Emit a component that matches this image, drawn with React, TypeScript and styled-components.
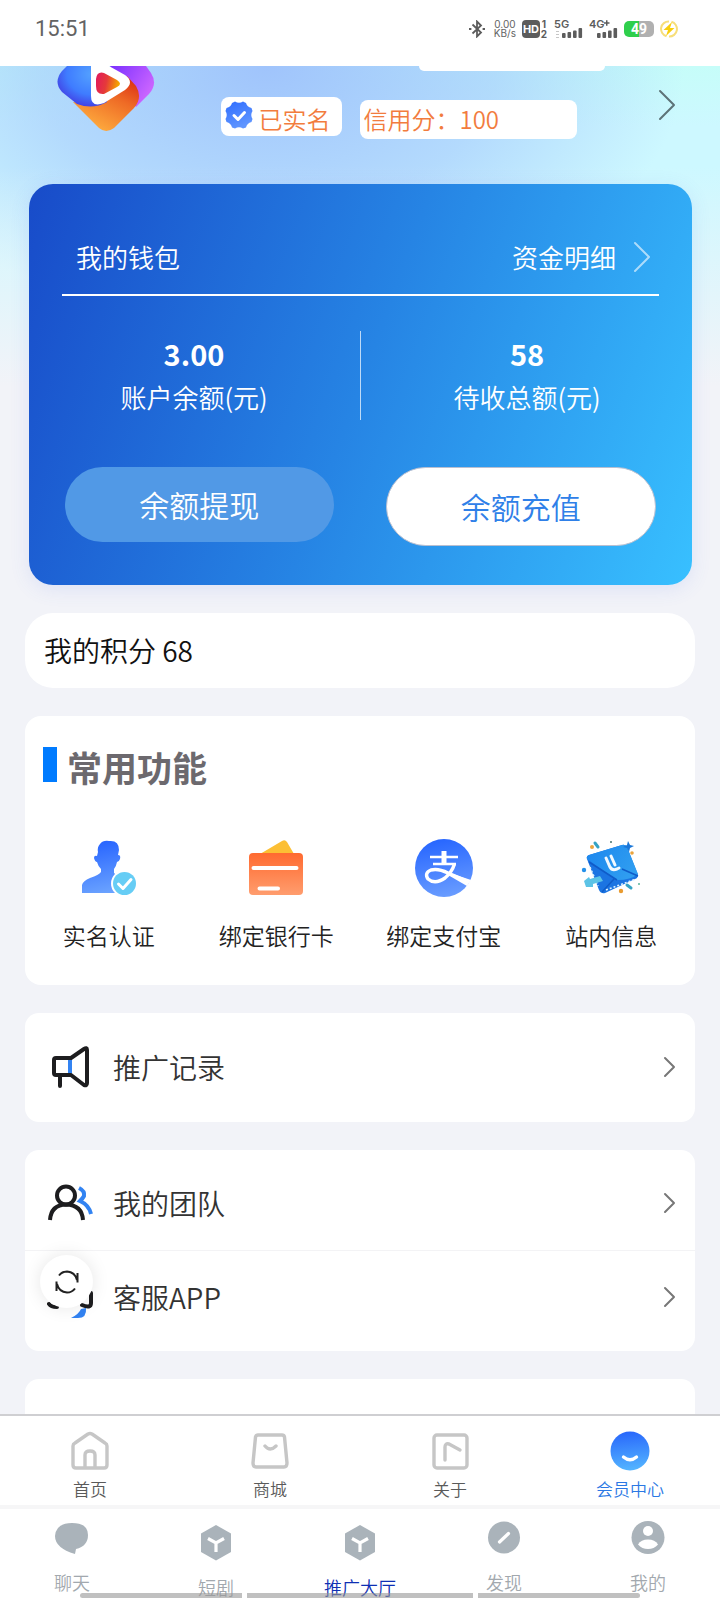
import React from "react";
import styled, { createGlobalStyle } from "styled-components";

const GlobalStyle = createGlobalStyle`
  *, *::before, *::after { box-sizing: border-box; }
  body {
    margin: 0;
    font-family: "Noto Sans CJK SC", "Noto Sans", sans-serif;
    font-weight: 350;
    color: #222;
    background: #f2f3f8;
  }
  button {
    border: 0;
    padding: 0;
    background: none;
    font: inherit;
    color: inherit;
    cursor: pointer;
  }
  a { color: inherit; text-decoration: none; }
  h1, h2, p, dl, dt, dd { margin: 0; }
  svg { display: block; flex: none; }
`;

const Page = styled.div`
  display: flex;
  flex-direction: column;
  height: 100vh;
`;

/* ---------- status bar ---------- */

const StatusBar = styled.header`
  display: flex;
  flex: none;
  align-items: center;
  justify-content: space-between;
  height: 66px;
  padding: 0 42px 8px 35px;
  background: #fff;
  color: #636363;
  font-family: Roboto, sans-serif;
  font-weight: 400;
`;

const Clock = styled.time`
  font-size: 22px;
  line-height: 28px;
`;

const StatusIcons = styled.div`
  display: flex;
  align-items: center;
  gap: 6px;
`;

const NetSpeed = styled.span`
  display: flex;
  flex-direction: column;
  align-items: center;
  margin-left: 3px;
  font-family: Inter, sans-serif;
  font-size: 10px;
  line-height: 9px;
`;

const Battery = styled.span`
  display: flex;
  align-items: center;
  justify-content: center;
  width: 30px;
  height: 16px;
  border-radius: 5px;
  background: linear-gradient(90deg, #2fcf4c 50%, #b0b0b0 50%);
  color: #fff;
  font-size: 14px;
  font-weight: 700;
  line-height: 16px;
`;

/* ---------- profile ---------- */

const Content = styled.main`
  flex: 1;
  min-height: 0;
  overflow-y: auto;
  scrollbar-width: none;
  background:
    linear-gradient(180deg, rgba(242, 243, 248, 0) 100px, #f2f3f8 320px) 0 0 / 100% 320px no-repeat,
    radial-gradient(ellipse 58% 260px at 37% 0, #a0c4fc 0, rgba(162, 198, 252, 0.6) 55%, rgba(162, 198, 252, 0) 100%) 0 0 / 100% 320px no-repeat,
    linear-gradient(180deg, #c6fdf9, #cdf8ff 60px, #cdf8ff) 0 0 / 100% 320px no-repeat,
    #f2f3f8;
`;

const Profile = styled.section`
  display: flex;
  justify-content: space-between;
  height: 118px;
  padding: 0 44px 0 57px;
`;

const ProfileInfo = styled.div`
  display: flex;
  flex-direction: column;
  width: 384px;
  margin-left: 12px;
  gap: 26px;
`;

const NameTag = styled.div`
  align-self: flex-end;
  width: 186px;
  height: 5px;
  border-radius: 0 0 8px 8px;
  background: #fff;
`;

const Badges = styled.div`
  display: flex;
  align-items: baseline;
  gap: 18px;
`;

const Badge = styled.span<{ $verified?: boolean }>`
  display: flex;
  gap: 6px;
  width: ${(p) => (p.$verified ? 121 : 217)}px;
  height: 39px;
  padding: ${(p) => (p.$verified ? "4px 4px 0" : "1px 4px 0")};
  border-radius: 8px;
  background: #fff;
  color: #f27c3e;
  font-size: 24px;
  line-height: 36px;
  white-space: nowrap;
`;

const ProfileLink = styled.button`
  align-self: flex-start;
  margin-top: 23px;
`;

/* ---------- wallet ---------- */

const Wallet = styled.section`
  margin: 0 28px 28px 29px;
  padding: 54px 33px 39px;
  border-radius: 24px;
  background: linear-gradient(110deg, #184bc9 0%, #2684e4 50%, #38c0ff 100%);
  box-shadow: 0 4px 20px rgba(70, 110, 230, 0.12);
  color: #fff;
  font-size: 26px;
  line-height: 40px;
`;

const WalletHead = styled.div`
  display: flex;
  align-items: center;
  justify-content: space-between;
  height: 58px;
  padding: 0 8px 18px 14px;
  border-bottom: 2px solid #fff;
`;

const DetailLink = styled.a`
  display: flex;
  align-items: center;
  gap: 17px;
`;

const Stats = styled.dl`
  display: flex;
  margin: 35px 0 47px;
`;

const Stat = styled.div`
  display: flex;
  flex: 1;
  flex-direction: column-reverse;
  justify-content: flex-end;
  height: 89px;
  text-align: center;

  & + & { border-left: 1px solid rgba(255, 255, 255, 0.7); }
  &:first-child { padding-right: 34px; }
  &:last-child { padding-left: 34px; }
`;

const StatValue = styled.dd`
  padding: 1px 0 3px;
  font-size: 29px;
  font-weight: 700;
  line-height: 42px;
`;

const WalletActions = styled.div`
  display: flex;
  align-items: flex-start;
  gap: 52px;
  padding: 0 3px;
`;

const PillButton = styled.button<{ $solid?: boolean }>`
  flex: 1;
  height: ${(p) => (p.$solid ? 79 : 75)}px;
  padding-bottom: 2px;
  border: ${(p) => (p.$solid ? "1px solid #b9bfd0" : "0")};
  border-radius: 40px;
  background: ${(p) => (p.$solid ? "#fff" : "#5199e6")};
  color: ${(p) => (p.$solid ? "#2f80e8" : "#fff")};
  font-size: 30px;
  line-height: 44px;
`;

/* ---------- cards ---------- */

const Card = styled.section<{ $radius?: number }>`
  margin: 0 25px 28px;
  border-radius: ${(p) => p.$radius ?? 14}px;
  background: #fff;
`;

const Points = styled.p`
  padding: 16px 19px 17px;
  color: #111;
  font-size: 28px;
  line-height: 42px;
`;

const SectionTitle = styled.h2`
  display: flex;
  align-items: flex-start;
  gap: 10px;
  padding: 31px 18px 0;
  color: #6c696e;
  font-size: 35px;
  font-weight: 700;
  line-height: 40px;

  &::before {
    content: "";
    width: 14px;
    height: 35px;
    background: #007bff;
  }
`;

const TileGrid = styled.div`
  display: grid;
  grid-template-columns: repeat(4, 1fr);
  padding: 51px 0 32px;
`;

const Tile = styled.button`
  display: flex;
  flex-direction: column;
  align-items: center;
  gap: 19px;
  font-size: 23px;
  line-height: 36px;
`;

const TileIcon = styled.span`
  display: grid;
  place-items: center;
  height: 60px;
`;

const List = styled.ul<{ $pad?: number }>`
  margin: 0;
  padding: ${(p) => p.$pad ?? 0}px 0;
  list-style: none;
`;

const ListRow = styled.li<{ $tall?: boolean }>`
  position: relative;
  height: ${(p) => (p.$tall ? 109 : 93)}px;

  & + & { height: 94px; border-top: 1px solid #f3f3f5; }
`;

const RowLink = styled.a`
  display: flex;
  align-items: center;
  height: 100%;
  padding: 0 19px 2px 22px;
  color: #333;
  font-size: 28px;
  line-height: 42px;
`;

const RowIcon = styled.span`
  width: 48px;
  margin-right: 18px;
`;

const RowLabel = styled.span`
  flex: 1;
`;

const RefreshButton = styled.button`
  position: absolute;
  top: 4px;
  left: 15px;
  display: grid;
  place-items: center;
  width: 53px;
  height: 53px;
  border-radius: 50%;
  background: #fff;
  box-shadow: 0 0 18px rgba(0, 0, 0, 0.1);
`;

/* ---------- bottom navigation ---------- */

const SiteNav = styled.nav`
  display: grid;
  flex: none;
  grid-template-columns: repeat(4, 1fr);
  padding: 15px 0 3px;
  border-top: 2px solid #cfcfd2;
  border-bottom: 4px solid #f6f6f7;
  background: #fff;
`;

const NavItem = styled.a<{ $active?: boolean }>`
  display: flex;
  flex-direction: column;
  align-items: center;
  gap: 5px;
  color: ${(p) => (p.$active ? "#2b78e4" : "#5a5a5a")};
  font-size: 17px;
  line-height: 26px;
`;

const AppNav = styled.nav`
  position: relative;
  display: grid;
  flex: none;
  grid-template-columns: repeat(5, 1fr);
  height: 91px;
  background: #fff;
`;

const AppItem = styled.a<{ $active?: boolean; $low?: boolean }>`
  display: flex;
  flex-direction: column;
  align-items: center;
  gap: 12px;
  padding-top: ${(p) => (p.$low ? 16 : 11)}px;
  color: ${(p) => (p.$active ? "#0e2fb4" : "#a2a8ae")};
  font-size: 18px;
  line-height: 28px;
`;

const GestureBars = styled.div`
  position: absolute;
  bottom: 2px;
  left: 80px;
  right: 80px;
  display: grid;
  grid-template-columns: 162fr 226fr 162fr;
  gap: 5px;
  pointer-events: none;
`;

const GestureBar = styled.span`
  height: 5px;
  background: rgba(150, 150, 150, 0.6);

  &:first-child { border-radius: 3px 0 0 3px; }
  &:last-child { border-radius: 0 3px 3px 0; }
`;

/* ---------- icons ---------- */

const Chevron = ({ w, h, color, stroke }: { w: number; h: number; color: string; stroke: number }) => (
  <svg width={w} height={h} viewBox={`0 0 ${w} ${h}`} fill="none" stroke={color} strokeWidth={stroke} strokeLinecap="round" strokeLinejoin="round">
    <path d={`M2 2L${w - 2} ${h / 2}L2 ${h - 2}`} />
  </svg>
);

const BluetoothIcon = () => (
  <svg width="16" height="18" viewBox="0 0 16 18" fill="none" stroke="#5c5c5c" strokeWidth="1.8">
    <path d="M3.5 4.5L12 12.5L8 16.5V1.5L12 5.5L3.5 13.5" />
    <path d="M0 9h2.4M13.6 9H16" strokeWidth="2.2" />
  </svg>
);

const HdIcon = () => (
  <svg width="26" height="28" viewBox="0 -4 26 28" fontFamily="Inter, sans-serif" fontWeight="700">
    <rect x="0" y="1" width="18" height="18" rx="4" fill="#5c5c5c" />
    <text x="9" y="14" fontSize="11" textAnchor="middle" fill="#fff">HD</text>
    <text x="22" y="9" fontSize="10" textAnchor="middle" fill="#5c5c5c">1</text>
    <text x="22" y="19" fontSize="10" textAnchor="middle" fill="#5c5c5c">2</text>
  </svg>
);

const SignalIcon = ({ label, plus, faint }: { label: string; plus?: boolean; faint?: boolean }) => (
  <svg width="29" height="28" viewBox="0 -4 29 28" fill="#5c5c5c">
    <text x="0" y="9" fontSize="11" fontWeight="600" fontFamily="Inter, sans-serif">{label}</text>
    {plus && <path d="M17 1.200h1.500v2h2v1.500h-2v2H17v-2h-2V3.200h2z" />}
    {faint && <path d="M2 12h3v1H2zM2 15h3v1H2zM2 18h3v1H2z" opacity="0.35" />}
    <rect x="8" y="14" width="3.6" height="5" rx="1" />
    <rect x="13.5" y="13" width="3.6" height="6" rx="1" />
    <rect x="19" y="11.500" width="3.600" height="7.500" rx="1" />
    <rect x="24.500" y="9" width="3.600" height="10" rx="1" />
  </svg>
);

const ChargeIcon = () => (
  <svg width="18" height="18" viewBox="0 0 18 18">
    <g fill="none" stroke="#f7de7a" strokeWidth="2">
      <path d="M6.500 16.200A7.500 7.500 0 0 1 9 1.500" />
      <path d="M11.500 1.800A7.500 7.500 0 0 1 9 16.500" />
    </g>
    <path d="M12 2L3.500 10h4.500l-2 6L14.500 8h-4.500z" fill="#f8ce0c" />
  </svg>
);

const AvatarLogo = () => (
  <svg width="98" height="66" viewBox="0 0 98 66">
    <defs>
      <radialGradient id="lgBlue" cx="0.7" cy="0.2" r="0.85">
        <stop offset="0" stopColor="#54a2ff" />
        <stop offset="0.6" stopColor="#3f7cff" />
        <stop offset="1" stopColor="#4338e0" />
      </radialGradient>
      <linearGradient id="lgPurple" x1="0" y1="0" x2="1" y2="0.6">
        <stop offset="0" stopColor="#7a2fff" />
        <stop offset="1" stopColor="#cf68ff" />
      </linearGradient>
      <linearGradient id="lgOrange" x1="0.9" y1="0" x2="0.3" y2="1">
        <stop offset="0" stopColor="#d92b12" />
        <stop offset="0.4" stopColor="#ee6a25" />
        <stop offset="1" stopColor="#ffb040" />
      </linearGradient>
      <linearGradient id="lgPlay" x1="0" y1="0" x2="1" y2="0.2">
        <stop offset="0" stopColor="#e2185e" />
        <stop offset="0.5" stopColor="#e53a3a" />
        <stop offset="1" stopColor="#f5a400" />
      </linearGradient>
    </defs>
    <path d="M53 0H89L94 7Q101 18 92 28L79 41L62 20Z" fill="url(#lgPurple)" />
    <path d="M16 36L42 62Q49 68 57 62L77 42Q86 32 79 20L70 10L40 38Z" fill="url(#lgOrange)" />
    <path d="M10 0H50V36Q36 44 20 38L5 26Q-4 16 5 5Z" fill="url(#lgBlue)" />
    <path d="M34 0H52L68 9Q78 16 68 24L47 37Q34 42 34 30Z" fill="#fff" />
    <path d="M39 13Q40 5 47 7L60 14Q66 18 60 21L47 28Q39 29 39 20Z" fill="url(#lgPlay)" />
  </svg>
);

const SealIcon = () => (
  <svg width="28" height="28" viewBox="0 0 28 28">
    <defs>
      <linearGradient id="seal" x1="0" y1="0" x2="0.4" y2="1">
        <stop offset="0" stopColor="#2f6dff" />
        <stop offset="1" stopColor="#5f95ff" />
      </linearGradient>
    </defs>
    <path
      d="M10 0.500Q14 3 18 0.500L21 2Q22 6 26.500 7L27.500 10Q25 14 27.500 18L26.500 21Q22 22 21 26.500L18 27.500Q14 25 10 27.500L7 26.500Q6 22 1.500 21L0.500 18Q3 14 0.500 10L1.500 7Q6 6 7 2Z"
      fill="url(#seal)"
    />
    <path d="M9 14.500l4 4L19.500 11.500" fill="none" stroke="#fff" strokeWidth="3" strokeLinecap="round" strokeLinejoin="round" />
  </svg>
);

const PersonIcon = () => (
  <svg width="56" height="56" viewBox="0 0 56 56">
    <defs>
      <linearGradient id="person" x1="0.3" y1="0" x2="0.5" y2="1">
        <stop offset="0" stopColor="#2663ff" />
        <stop offset="1" stopColor="#6aa2ff" />
      </linearGradient>
    </defs>
    <path d="M17 12Q16 7 19 4Q22 0 28 1Q38 0 38 10L37 15Q40 15 39 19Q38 22 36 22Q35 27 33 29V33Q36 36 46 39V53H1V45Q2 41 9 38Q18 35 20 32V29Q17 26 16 22Q14 22 13 18Q13 15 16 16Z" fill="url(#person)" />
    <circle cx="43.500" cy="43.500" r="13.500" fill="#fff" />
    <circle cx="43.500" cy="43.500" r="11.500" fill="#66cdf5" />
    <path d="M37.500 44l4.500 4.500L50 39.500" fill="none" stroke="#fff" strokeWidth="3" strokeLinecap="round" strokeLinejoin="round" />
  </svg>
);

const BankCardIcon = () => (
  <svg width="54" height="56" viewBox="0 0 54 56">
    <defs>
      <linearGradient id="bank" x1="0" y1="0" x2="0" y2="1">
        <stop offset="0" stopColor="#ff6a30" />
        <stop offset="1" stopColor="#ff9d6e" />
      </linearGradient>
    </defs>
    <path d="M11 14L33 1Q36 -1 38 2L45 14Z" fill="#fcbf34" />
    <rect x="0" y="13" width="54" height="42" rx="4" fill="url(#bank)" />
    <path d="M4.500 28H47.500M10.500 48.500H29" stroke="#fff" strokeWidth="4" strokeLinecap="round" />
  </svg>
);

const AlipayIcon = () => (
  <svg width="58" height="58" viewBox="0 0 58 58">
    <defs>
      <linearGradient id="alipay" x1="0.4" y1="0" x2="0.6" y2="1">
        <stop offset="0" stopColor="#2766ff" />
        <stop offset="1" stopColor="#6a9dff" />
      </linearGradient>
    </defs>
    <circle cx="29" cy="29" r="29" fill="url(#alipay)" />
    <g fill="none" stroke="#fff">
      <path d="M15 18H43M18 25H41" strokeWidth="2.600" />
      <path d="M29 12V25" strokeWidth="5" />
      <path d="M39.500 25Q37 33 30 39Q20 46 13 40Q9 34 16 31Q23 29 33 34L54 43" strokeWidth="3.400" />
    </g>
    <path d="M38 35L56 41L52 47L33 36Z" fill="#fff" />
  </svg>
);

const MailIcon = () => (
  <svg width="60" height="56" viewBox="0 0 60 56">
    <defs>
      <linearGradient id="mail" x1="0" y1="0" x2="1" y2="0.5">
        <stop offset="0" stopColor="#1b86ee" />
        <stop offset="1" stopColor="#2f9df0" />
      </linearGradient>
    </defs>
    <path d="M6 19Q5 16 8 15L41 5Q44 4 46 7L57 35Q57 38 54 39L24 53Q20 54 18 50Z" fill="#1b74e2" />
    <path d="M6 19Q5 16 8 15L41 5Q44 4 46 7L57 34Q50 40 36 40Z" fill="url(#mail)" />
    <path d="M8 22L36 40M41 29L57 36M33 39L21 52" fill="none" stroke="#0f5cc9" strokeWidth="1.500" />
    <path d="M9 27L17 46M25 50L55 39" fill="none" stroke="#d9f0ff" strokeWidth="1.600" strokeDasharray="2 2" />
    <path d="M25 18L29 27Q31 31 36 29L38 28M30 16L34 25" fill="none" stroke="#f2f9ff" strokeWidth="3" strokeLinecap="round" />
    <path d="M3 41L8 37L9 39L19 36L22 41L12 44L12 47L5 47Z" fill="#5cc3e6" />
    <path d="M47 1L49 5L53 6L49 8L48 12L46 8L42 7L46 5Z" fill="#1976d8" />
    <circle cx="11" cy="7" r="2" fill="#eba43d" />
    <circle cx="51" cy="13" r="1.800" fill="#eba43d" />
    <circle cx="40" cy="51" r="2.200" fill="#e99b30" />
    <circle cx="3" cy="30" r="2.200" fill="#2591ea" />
    <circle cx="30" cy="2" r="1" fill="#48736c" />
    <circle cx="58" cy="44" r="1" fill="#58b59a" />
    <path d="M14 3L17 7M46 45L50 48" stroke="#35a3c4" strokeWidth="3" strokeLinecap="round" />
  </svg>
);

const MegaphoneIcon = () => (
  <svg width="48" height="44" viewBox="0 0 48 44" fill="none" stroke="#1d1d1f" strokeWidth="4" strokeLinecap="round" strokeLinejoin="round">
    <path d="M23 14V29" stroke="#3283f2" strokeLinecap="butt" />
    <path d="M24 13H9Q7 13 7 15V28Q7 30 9 30H24L37 40Q40 41 40 38V5Q40 2 37 4ZM13 31V41" />
  </svg>
);

const TeamIcon = () => (
  <svg width="48" height="40" viewBox="0 0 48 40" fill="none" stroke="#1d1d1f" strokeWidth="4">
    <path d="M32 5Q38 8 37 13Q36 15 33 18Q42 22 44 31" stroke="#3283f2" />
    <circle cx="19" cy="12.500" r="9" />
    <path d="M3 37Q4 22 19 21.500Q35 22 36 37" />
  </svg>
);

const SupportIcon = () => (
  <svg width="48" height="52" viewBox="0 0 48 52" fill="none">
    <path d="M3 28V16Q3 9 10 9H36" stroke="#1d1d1f" strokeWidth="4" />
    <path d="M2 33Q4 36 10 36M35 34Q44 38 44 32V22" stroke="#1d1d1f" strokeWidth="4" strokeLinecap="round" />
    <path d="M24 47Q32 43 34 38L39 37Q40 47 31 47Z" fill="#3283f2" />
  </svg>
);

const RefreshIcon = () => (
  <svg width="24" height="24" viewBox="0 0 24 24" fill="none" stroke="#222" strokeWidth="2">
    <path d="M4 5.500Q7 1.500 12 1.500Q20 2 22 10M22.500 3V12.500" />
    <path d="M20 18.500Q17 22.500 12 22.500Q4 22 2 14M1.500 21V11.500" />
  </svg>
);

const HomeIcon = () => (
  <svg width="40" height="40" viewBox="0 0 40 40" fill="none" stroke="#c6c6c6" strokeWidth="3.400" strokeLinejoin="round">
    <path d="M3 15Q3 13 5 12L18 3Q20 2 22 3L35 12Q37 13 37 15V34Q37 37 34 37H6Q3 37 3 34ZM15 37V24Q15 20 20 20Q25 20 25 24V37" />
  </svg>
);

const BagIcon = () => (
  <svg width="40" height="40" viewBox="0 0 40 40" fill="none" stroke="#c6c6c6" strokeWidth="3.400" strokeLinejoin="round" strokeLinecap="round">
    <path d="M8 4H32Q34 4 34.500 6L37 32Q37 36 34 36H6Q3 36 3 32L5.500 6Q6 4 8 4ZM15 15Q20 21 26 15" />
  </svg>
);

const AboutIcon = () => (
  <svg width="40" height="40" viewBox="0 0 40 40" fill="none" stroke="#c6c6c6" strokeWidth="3.400" strokeLinejoin="round" strokeLinecap="round">
    <rect x="4" y="4" width="33" height="33" rx="3" />
    <path d="M15 29V16Q15 12 19 13L30 19" />
  </svg>
);

const SmileIcon = () => (
  <svg width="40" height="40" viewBox="0 0 40 40">
    <defs>
      <linearGradient id="smile" x1="0" y1="0" x2="0.1" y2="1">
        <stop offset="0" stopColor="#2764fb" />
        <stop offset="1" stopColor="#52b2ff" />
      </linearGradient>
    </defs>
    <circle cx="20" cy="20" r="19.500" fill="url(#smile)" />
    <path d="M13.500 26Q20 31.500 26.500 26" fill="none" stroke="#fff" strokeWidth="3.400" strokeLinecap="round" />
  </svg>
);

const ChatIcon = () => (
  <svg width="34" height="36" viewBox="0 0 34 36">
    <path d="M17 3Q33 3 33 15Q33 26 21 29L20 34Q0 28 0 16Q1 3 17 3Z" fill="#aab3ba" />
  </svg>
);

const CubeIcon = () => (
  <svg width="32" height="36" viewBox="0 0 32 36">
    <path d="M16 0L31 8.500V27L16 35.500L1 27V8.500Z" fill="#aab3ba" />
    <path d="M8 13.500L16 18L24 13.500M16 18V27" fill="none" stroke="#fff" strokeWidth="3.200" />
  </svg>
);

const CompassIcon = () => (
  <svg width="34" height="36" viewBox="0 0 34 36">
    <circle cx="17" cy="17.500" r="16" fill="#aab3ba" />
    <path d="M12.500 22L21.500 13.500" stroke="#fff" strokeWidth="3.200" strokeLinecap="round" />
  </svg>
);

const AccountIcon = () => (
  <svg width="34" height="36" viewBox="0 0 34 36">
    <circle cx="17" cy="17.500" r="16.500" fill="#aab3ba" />
    <circle cx="17" cy="11" r="5" fill="#fff" />
    <path d="M7 24.500Q10 19.500 17 19.500Q24 19.500 27 24.500Q23 29 17 29Q11 29 7 24.500Z" fill="#fff" />
  </svg>
);

/* ---------- page ---------- */

const tiles = [
  { label: "实名认证", icon: <PersonIcon /> },
  { label: "绑定银行卡", icon: <BankCardIcon /> },
  { label: "绑定支付宝", icon: <AlipayIcon /> },
  { label: "站内信息", icon: <MailIcon /> },
];

const siteNav = [
  { label: "首页", icon: <HomeIcon /> },
  { label: "商城", icon: <BagIcon /> },
  { label: "关于", icon: <AboutIcon /> },
  { label: "会员中心", icon: <SmileIcon />, active: true },
];

const appNav = [
  { label: "聊天", icon: <ChatIcon /> },
  { label: "短剧", icon: <CubeIcon />, low: true },
  { label: "推广大厅", icon: <CubeIcon />, low: true, active: true },
  { label: "发现", icon: <CompassIcon /> },
  { label: "我的", icon: <AccountIcon /> },
];

const RowContent = ({ icon, label }: { icon: React.ReactNode; label: string }) => (
  <RowLink href="#">
    <RowIcon>{icon}</RowIcon>
    <RowLabel>{label}</RowLabel>
    <Chevron w={13} h={22} color="#777" stroke={2} />
  </RowLink>
);

export default function App() {
  return (
    <Page>
      <GlobalStyle />
      <StatusBar>
        <Clock>15:51</Clock>
        <StatusIcons>
          <BluetoothIcon />
          <NetSpeed>
            <span>0.00</span>
            <span>KB/s</span>
          </NetSpeed>
          <HdIcon />
          <SignalIcon label="5G" faint />
          <SignalIcon label="4G" plus />
          <Battery>49</Battery>
          <ChargeIcon />
        </StatusIcons>
      </StatusBar>

      <Content>
        <Profile>
          <AvatarLogo />
          <ProfileInfo>
            <NameTag />
            <Badges>
              <Badge $verified>
                <SealIcon />
                已实名
              </Badge>
              <Badge>信用分：100</Badge>
            </Badges>
          </ProfileInfo>
          <ProfileLink type="button" aria-label="个人资料">
            <Chevron w={18} h={32} color="#5d7377" stroke={2} />
          </ProfileLink>
        </Profile>

        <Wallet>
          <WalletHead>
            <span>我的钱包</span>
            <DetailLink href="#">
              资金明细
              <Chevron w={18} h={32} color="rgba(255,255,255,0.6)" stroke={2} />
            </DetailLink>
          </WalletHead>
          <Stats>
            <Stat>
              <dt>账户余额(元)</dt>
              <StatValue>3.00</StatValue>
            </Stat>
            <Stat>
              <dt>待收总额(元)</dt>
              <StatValue>58</StatValue>
            </Stat>
          </Stats>
          <WalletActions>
            <PillButton type="button">余额提现</PillButton>
            <PillButton type="button" $solid>余额充值</PillButton>
          </WalletActions>
        </Wallet>

        <Card $radius={28}>
          <Points>我的积分 68</Points>
        </Card>

        <Card $radius={16}>
          <SectionTitle>常用功能</SectionTitle>
          <TileGrid>
            {tiles.map((t) => (
              <Tile key={t.label} type="button">
                <TileIcon>{t.icon}</TileIcon>
                {t.label}
              </Tile>
            ))}
          </TileGrid>
        </Card>

        <Card>
          <List>
            <ListRow $tall>
              <RowContent icon={<MegaphoneIcon />} label="推广记录" />
            </ListRow>
          </List>
        </Card>

        <Card>
          <List $pad={7}>
            <ListRow>
              <RowContent icon={<TeamIcon />} label="我的团队" />
            </ListRow>
            <ListRow>
              <RowContent icon={<SupportIcon />} label="客服APP" />
              <RefreshButton type="button" aria-label="刷新">
                <RefreshIcon />
              </RefreshButton>
            </ListRow>
          </List>
        </Card>

        <Card>
          <List>
            <ListRow $tall />
          </List>
        </Card>
      </Content>

      <SiteNav>
        {siteNav.map((n) => (
          <NavItem key={n.label} href="#" $active={n.active}>
            {n.icon}
            {n.label}
          </NavItem>
        ))}
      </SiteNav>
      <AppNav>
        {appNav.map((n) => (
          <AppItem key={n.label} href="#" $active={n.active} $low={n.low}>
            {n.icon}
            {n.label}
          </AppItem>
        ))}
        <GestureBars>
          <GestureBar />
          <GestureBar />
          <GestureBar />
        </GestureBars>
      </AppNav>
    </Page>
  );
}
